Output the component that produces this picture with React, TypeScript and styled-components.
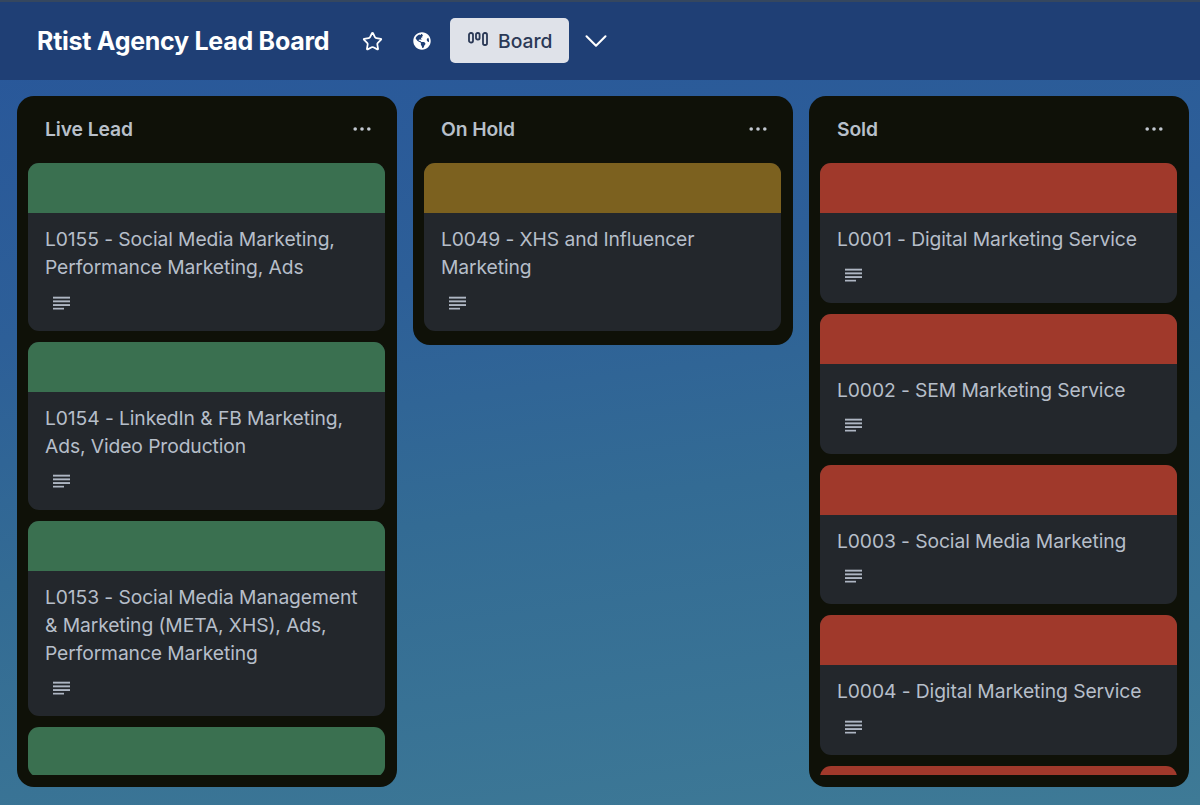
import React from "react";
import styled, { createGlobalStyle } from "styled-components";
import { Star, ChevronDown } from "lucide-react";
import { FaGlobeAmericas } from "react-icons/fa";

const Global = createGlobalStyle`
  html, body { margin: 0; padding: 0; height: 100%; overflow: hidden; }
  body { font-family: Inter, "Liberation Sans", sans-serif; }
  #root { height: 100%; }
`;

const Page = styled.div`
  height: 805px;
  display: flex;
  flex-direction: column;
  background: linear-gradient(172deg, #28569a 0%, #2d5f98 35%, #336b94 60%, #3e7a96 100%);
`;

const Header = styled.header`
  height: 80px;
  box-sizing: border-box;
  flex: none;
  display: flex;
  align-items: center;
  padding: 0 0 0 37px;
  background: #1f3f75;
  border-top: 2px solid #35475f;
`;

const BoardTitle = styled.h1`
  margin: 0 30px 0 0;
  width: 292px;
  font-size: 25px;
  font-weight: 700;
  letter-spacing: -0.27px;
  color: #fff;
  white-space: nowrap;
`;

const HeaderIcon = styled.span<{ $w: number; $inset?: number }>`
  width: ${(p) => p.$w}px;
  padding-left: ${(p) => p.$inset ?? 0}px;
  box-sizing: border-box;
  display: flex;
  align-items: center;
  color: #fff;
`;

const BoardButton = styled.div`
  width: 119px;
  height: 45px;
  box-sizing: border-box;
  margin: 0 8px 1px 0;
  padding-left: 18px;
  display: flex;
  align-items: center;
  gap: 10px;
  border-radius: 5px;
  background: #dfe2e9;
  color: #2b3956;
  font-size: 19.3px;
  font-weight: 500;
`;

const Board = styled.main`
  flex: 1;
  min-height: 0;
  display: flex;
  align-items: flex-start;
  gap: 16px;
  padding: 16px 0 18px 16.7px;
`;

const Column = styled.section`
  width: 380px;
  max-height: 100%;
  box-sizing: border-box;
  display: flex;
  flex-direction: column;
  padding: 0 11.3px 12px;
  border-radius: 17px;
  background: #0f1108;
`;

const ColumnHead = styled.div`
  height: 67px;
  box-sizing: border-box;
  flex: none;
  display: flex;
  align-items: center;
  justify-content: space-between;
  padding: 0 14px 1px 17px;
`;

const ColumnTitle = styled.h2`
  margin: 0;
  font-size: 19.3px;
  font-weight: 600;
  letter-spacing: -0.1px;
  color: #b8c0ca;
`;

const CardList = styled.div`
  min-height: 0;
  display: flex;
  flex-direction: column;
  gap: 11px;
  overflow: hidden;
`;

const Card = styled.article`
  flex: none;
  overflow: hidden;
  border-radius: 11px;
  background: #23272c;
  &:last-child:first-child { margin-bottom: 2px; }
`;

const Cover = styled.div<{ $color: string }>`
  height: 50px;
  background: ${(p) => p.$color};
`;

const CardBody = styled.div`
  padding: 12px 17px 13.75px;
`;

const CardTitle = styled.p`
  margin: 0;
  font-size: 19.3px;
  line-height: 28px;
  letter-spacing: -0.1px;
  color: #b6bec9;
`;

const Badges = styled.div`
  height: 28px;
  margin-top: 8px;
  padding-left: 8px;
  display: flex;
  align-items: center;
  color: #aeb6c3;
`;

const DotsIcon = () => (
  <svg width="18" height="4" viewBox="0 0 18 4" fill="#c2c8d0">
    <circle cx="2.2" cy="2" r="1.8" />
    <circle cx="9" cy="2" r="1.8" />
    <circle cx="15.8" cy="2" r="1.8" />
  </svg>
);

const LinesIcon = () => (
  <svg width="17" height="15" viewBox="0 0 17 15" fill="currentColor">
    <rect x="0" y="0.7" width="17" height="1.9" />
    <rect x="0" y="4.4" width="17" height="1.9" />
    <rect x="0" y="8.1" width="17" height="1.9" />
    <rect x="0" y="11.8" width="11" height="1.7" />
  </svg>
);

const BoardGlyph = () => (
  <svg width="20" height="14" viewBox="0 0 20 14" fill="none" stroke="currentColor" strokeWidth="1.8" style={{ marginBottom: 3 }}>
    <rect x="1" y="1" width="4" height="9.5" rx="1.8" />
    <rect x="8" y="1" width="3.6" height="6.5" rx="1.6" />
    <rect x="15" y="1" width="4" height="12" rx="1.8" />
  </svg>
);

type ColumnData = { title: string; color: string; cards: string[]; peek?: boolean };

const columns: ColumnData[] = [
  {
    title: "Live Lead",
    color: "#3a7050",
    peek: true,
    cards: [
      "L0155 - Social Media Marketing, Performance Marketing, Ads",
      "L0154 - LinkedIn & FB Marketing, Ads, Video Production",
      "L0153 - Social Media Management & Marketing (META, XHS), Ads, Performance Marketing",
    ],
  },
  {
    title: "On Hold",
    color: "#7c611f",
    cards: ["L0049 - XHS and Influencer Marketing"],
  },
  {
    title: "Sold",
    color: "#a0392b",
    peek: true,
    cards: [
      "L0001 - Digital Marketing Service",
      "L0002 - SEM Marketing Service",
      "L0003 - Social Media Marketing",
      "L0004 - Digital Marketing Service",
    ],
  },
];

export default function App() {
  return (
    <Page>
      <Global />
      <Header>
        <BoardTitle>Rtist Agency Lead Board</BoardTitle>
        <HeaderIcon $w={50} $inset={3}>
          <Star size={21} strokeWidth={2} />
        </HeaderIcon>
        <HeaderIcon $w={41} $inset={4}>
          <FaGlobeAmericas size={18} />
        </HeaderIcon>
        <BoardButton>
          <BoardGlyph />
          Board
        </BoardButton>
        <HeaderIcon $w={38}>
          <ChevronDown size={38} strokeWidth={1.3} />
        </HeaderIcon>
      </Header>
      <Board>
        {columns.map((c) => (
          <Column key={c.title}>
            <ColumnHead>
              <ColumnTitle>{c.title}</ColumnTitle>
              <DotsIcon />
            </ColumnHead>
            <CardList>
              {c.cards.map((title) => (
                <Card key={title}>
                  <Cover $color={c.color} />
                  <CardBody>
                    <CardTitle>{title}</CardTitle>
                    <Badges>
                      <LinesIcon />
                    </Badges>
                  </CardBody>
                </Card>
              ))}
              {c.peek && (
                <Card>
                  <Cover $color={c.color} />
                </Card>
              )}
            </CardList>
          </Column>
        ))}
      </Board>
    </Page>
  );
}
